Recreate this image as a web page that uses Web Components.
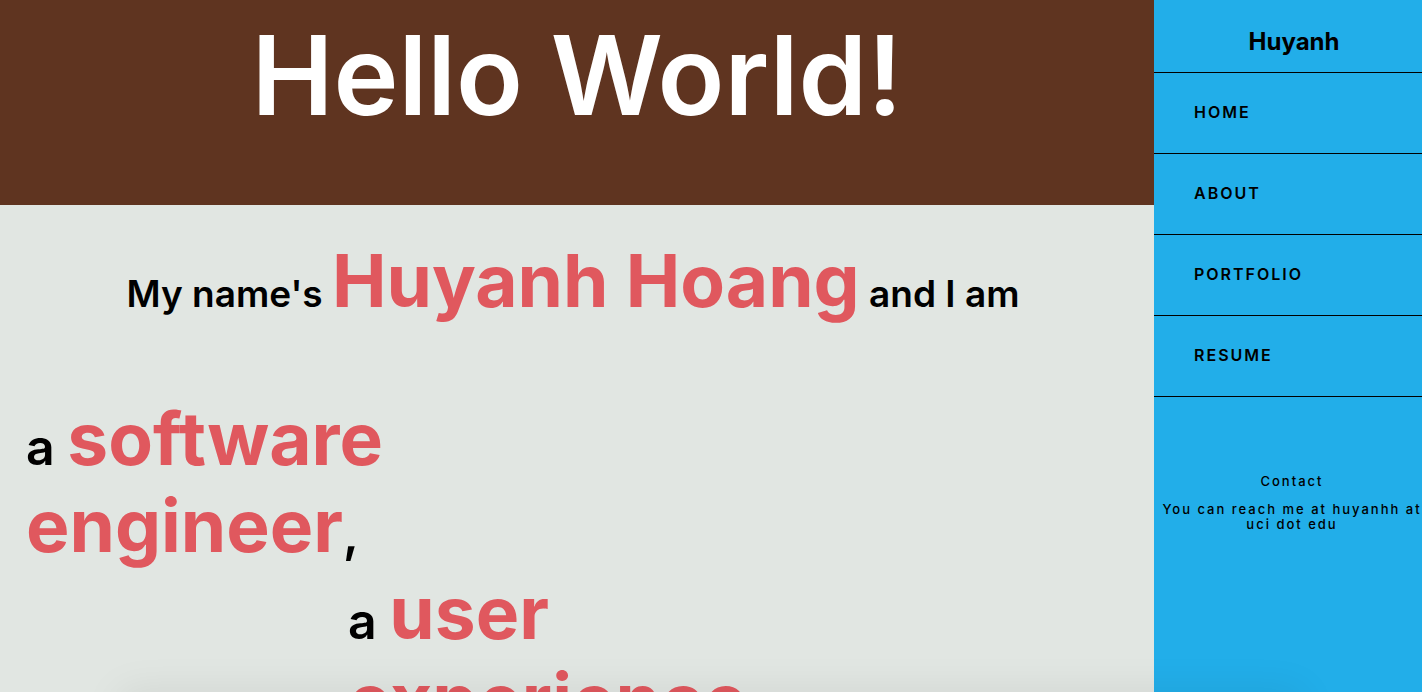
<!DOCTYPE html>
<html lang="en">
<head>
<meta charset="utf-8">
<meta name="viewport" content="width=device-width, initial-scale=1">
<title>Huyanh Hoang</title>
<style>
body { margin: 0; font-family: Inter, "Open Sans", sans-serif; color: #000; background: #e1e6e2; }
</style>
</head>
<body>
<home-page>
  <page-hero>Hello World!</page-hero>
  <intro-line>My name's <accent-text>Huyanh Hoang</accent-text> and I am</intro-line>
  <role-list>
    <role-item>a <accent-text>software engineer</accent-text>,</role-item>
    <role-item indent>a <accent-text>user experience</accent-text></role-item>
  </role-list>
  <side-bar slot="side">
    <span slot="brand">Huyanh</span>
    <nav-item href="#home">HOME</nav-item>
    <nav-item href="#about">ABOUT</nav-item>
    <nav-item href="#portfolio">PORTFOLIO</nav-item>
    <nav-item href="#resume">RESUME</nav-item>
    <contact-card slot="contact" heading="Contact">You can reach me at huyanhh at uci dot edu</contact-card>
  </side-bar>
</home-page>
<script>
const define = (name, html) => customElements.define(name, class extends HTMLElement {
  constructor() {
    super();
    this.attachShadow({ mode: 'open' }).innerHTML = html;
  }
  connectedCallback() {
    const link = this.shadowRoot.querySelector('a');
    if (link) link.href = this.getAttribute('href');
    const heading = this.shadowRoot.querySelector('h3');
    if (heading) heading.textContent = this.getAttribute('heading');
  }
});

define('home-page', `
  <style>
    :host { display: grid; grid-template-columns: minmax(0, 1fr) 268px; height: 100vh; overflow: hidden; }
    main { overflow-y: auto; scrollbar-width: none; }
    .shade { position: fixed; top: 100%; left: 120px; right: 120px; height: 40px;
      box-shadow: 0 0 40px rgba(0, 0, 0, .08); pointer-events: none; }
  </style>
  <main><slot></slot></main>
  <slot name="side"></slot>
  <div class="shade"></div>`);

define('page-hero', `
  <style>
    :host { display: block; background: #5f3420; color: #fff; padding: 9px 0 64px; text-align: center; }
    h1 { margin: 0; font-size: 110px; line-height: 132px; font-weight: 600; }
  </style>
  <h1><slot></slot></h1>`);

define('accent-text', `
  <style>
    :host { color: #e0585e; font-size: 73px; line-height: 87px; font-weight: 700; }
  </style>
  <slot></slot>`);

define('intro-line', `
  <style>
    :host { display: block; padding: 32px 8px 71px 0; text-align: center; }
    h2 { margin: 0; font-size: 37px; line-height: 1; font-weight: 600; }
  </style>
  <h2><slot></slot></h2>`);

define('role-list', `
  <style>:host { display: block; padding: 0 26px; }</style>
  <div role="list"><slot></slot></div>`);

define('role-item', `
  <style>
    :host { display: block; width: 400px; font-size: 50px; line-height: 1; font-weight: 600; }
    :host([indent]) { margin-left: 322px; }
  </style>
  <div role="listitem"><slot></slot></div>`);

define('side-bar', `
  <style>
    :host { display: block; background: #22aee9; }
    h2 { margin: 0; padding: 24px 0 12px 12px; border-bottom: 1px solid #000; text-align: center;
      font-size: 24px; line-height: 36px; font-weight: 700; }
  </style>
  <h2><slot name="brand"></slot></h2>
  <nav><slot></slot></nav>
  <slot name="contact"></slot>`);

define('nav-item', `
  <style>
    :host { display: block; border-bottom: 1px solid #000; }
    a { display: block; padding: 0 40px 2px; color: #000; text-decoration: none;
      font-size: 16px; line-height: 78px; font-weight: 600; letter-spacing: 2px; }
  </style>
  <a href="#"><slot></slot></a>`);

define('contact-card', `
  <style>
    :host { display: block; padding: 77px 0 0 8px; text-align: center; font-size: 13px; line-height: 15px;
      font-weight: 500; letter-spacing: 2px; }
    h3 { margin: 0 0 13px; font: inherit; }
    p { margin: 0; }
  </style>
  <h3></h3>
  <p><slot></slot></p>`);
</script>
</body>
</html>
